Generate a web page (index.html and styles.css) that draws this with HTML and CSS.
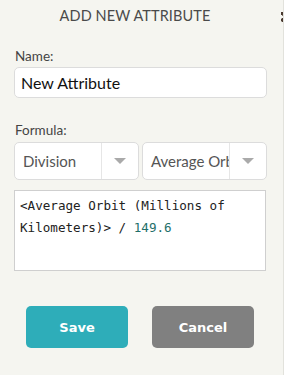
FILE: index.html
```html
<!DOCTYPE html>
<html lang="en">
<head>
  <meta charset="UTF-8" />
  <meta name="viewport" content="width=device-width, initial-scale=1.0" />
  <title>Add New Attribute</title>
  <link rel="stylesheet" href="styles.css">
</head>
<body>

  <div class="panel">
    <div class="title">ADD NEW ATTRIBUTE</div>

    <!-- nome do atributo -->
    <div class="field">
      <div class="label">Name:</div>
      <div class="input">New Attribute</div>
    </div>

    <!-- formula -->
    <div class="field formula">
      <div class="label">Formula:</div>
      <div class="selects">
        <div class="select">
          <span class="value">Division</span>
          <span class="arrow"><i></i></span>
        </div>
        <div class="select">
          <span class="value">Average Orbit (Millions of Kilometers)</span>
          <span class="arrow"><i></i></span>
        </div>
      </div>
      <div class="editor">&lt;Average Orbit (Millions of Kilometers)&gt; / <span class="num">149.6</span></div>
    </div>

    <div class="buttons">
      <button class="btn save">Save</button>
      <button class="btn cancel">Cancel</button>
    </div>
  </div>

  <div class="edge">
    <span class="grip"></span>
  </div>

</body>
</html>
```

FILE: styles.css
```css
body {
  margin: 0;
  background: #f5f5f0;
  font-family: Lato, "Open Sans", sans-serif;
  color: #333;
  display: flex;
  height: 375px;
  overflow: hidden;
}

.panel {
  width: 253px;
  padding: 0 14px;
}

.title {
  text-align: center;
  font-size: 14.5px;
  color: #4a4a4a;
  padding: 7px 11px 0 0;
  height: 24px;
  letter-spacing: 0.1px;
}

.field {
  margin-top: 17px;
}

.label {
  font-size: 13.5px;
  color: #444;
  padding-left: 1px;
  height: 19px;
}

.input {
  height: 31px;
  box-sizing: border-box;
  border: 1px solid #dcdcdc;
  border-radius: 5px;
  background: #fff;
  font-size: 16px;
  color: #111;
  padding: 5px 6px;
  width: 253px;
}

.formula {
  margin-top: 24px;
}

.selects {
  display: flex;
  gap: 3px;
  margin-top: 1px;
}

.select {
  width: 125px;
  height: 38px;
  box-sizing: border-box;
  border: 1px solid #dcdcdc;
  border-radius: 5px;
  background: #fff;
  display: flex;
  align-items: center;
  overflow: hidden;
}

.select .value {
  flex: 1;
  padding-left: 8px;
  font-size: 15px;
  color: #555;
  white-space: nowrap;
  overflow: hidden;
}

.select .arrow {
  width: 36px;
  height: 100%;
  border-left: 1px solid #e6e6e6;
  display: flex;
  align-items: center;
  justify-content: center;
}

.select .arrow i {
  width: 0;
  height: 0;
  border-left: 6px solid transparent;
  border-right: 6px solid transparent;
  border-top: 6px solid #aaa;
}

.editor {
  margin-top: 10px;
  width: 252px;
  height: 81px;
  box-sizing: border-box;
  border: 1px solid #cfcfcf;
  background: #fff;
  font-family: "DejaVu Sans Mono", monospace;
  font-size: 12.6px;
  line-height: 22px;
  color: #222;
  padding: 4px 5px;
}

.editor .num {
  color: #1f6f6a;
}

.buttons {
  display: flex;
  gap: 24px;
  margin-top: 35px;
  padding-left: 12px;
}

.btn {
  width: 102px;
  height: 42px;
  border: none;
  border-radius: 5px;
  color: #fff;
  font-family: "DejaVu Sans", Verdana, sans-serif;
  font-weight: bold;
  font-size: 13px;
}

.btn.save {
  background: #2eadb9;
}

.btn.cancel {
  background: #808080;
}

.edge {
  flex: 1;
  border-right: 1px solid #e2e2dc;
  position: relative;
}

/* pedaco do icone cortado no canto */
.grip {
  position: absolute;
  right: 0;
  top: 12px;
  width: 3px;
  height: 10px;
  background:
    radial-gradient(circle at 3px 1.5px, #4a3a30 2px, transparent 2.2px),
    radial-gradient(circle at 3px 8px, #4a3a30 2px, transparent 2.2px);
}
```
